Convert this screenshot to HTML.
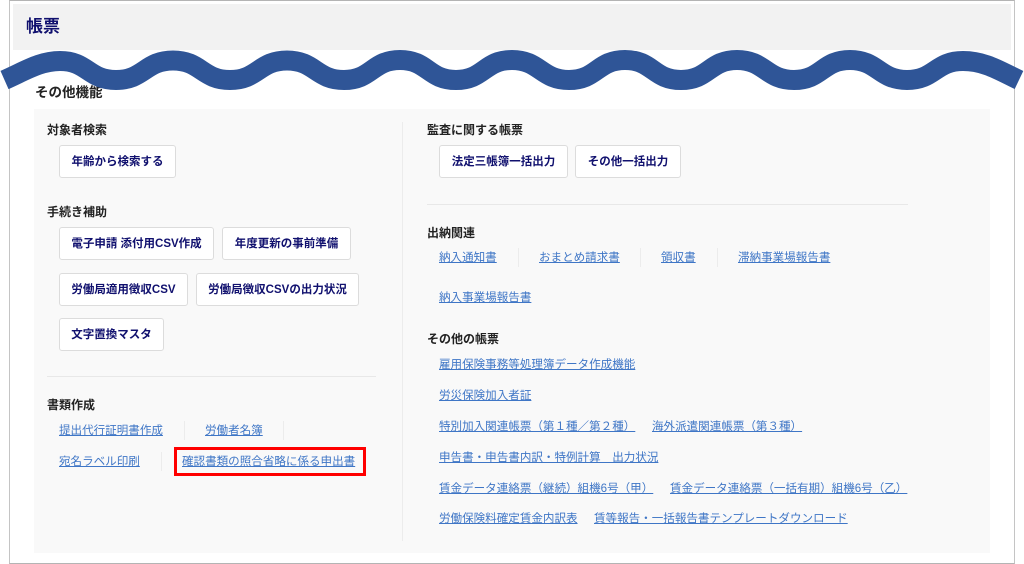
<!DOCTYPE html>
<html lang="ja">
<head>
<meta charset="utf-8">
<title>帳票</title>
<style>
html,body{margin:0;padding:0;background:#fff}
body{position:relative;width:1024px;height:564px;overflow:hidden;font-family:"Liberation Sans","Noto Sans CJK JP",sans-serif}
#w{position:absolute;left:0;top:0;width:1024px;height:564px;filter:blur(.35px)}
.r{position:absolute}
.h,.a,.b{position:absolute;white-space:nowrap;line-height:16px}
.h{font-size:12px;font-weight:bold;color:#222}
.a{font-size:11.56px;color:#3f76c6;text-decoration:underline}
.b{box-sizing:border-box;height:33px;line-height:33px;background:#fff;border:1px solid #dcdcdc;border-radius:3px;font-size:11.5px;font-weight:bold;color:#10106e;text-align:center}
.s{position:absolute;width:1px;height:19px;background:#ececec}
</style>
</head>
<body>
<div id="w">
<div class="r" style="left:9px;top:0;width:1006px;height:564px;box-sizing:border-box;border:1px solid #b4b4b4;border-left:1.5px solid #c4c4c4;border-right:1.5px solid #c4c4c4"></div>
<div class="r" style="left:13px;top:4px;width:998px;height:46px;background:#f2f2f2"></div>
<div class="r" style="left:26px;top:17px;font-size:17px;line-height:20px;font-weight:bold;color:#10106e">帳票</div>
<div class="r" style="left:35px;top:84px;font-size:13.5px;line-height:18px;font-weight:bold;color:#222">その他機能</div>
<div class="r" style="left:34px;top:109px;width:956px;height:444px;background:#f9f9f9"></div>
<div class="r" style="left:402px;top:122px;width:1px;height:419px;background:#ececec"></div>
<div class="r" style="left:47px;top:376px;width:329px;height:1px;background:#e8e8e8"></div>
<div class="r" style="left:427px;top:204px;width:481px;height:1px;background:#e8e8e8"></div>

<div class="h" style="left:47px;top:122px">対象者検索</div>
<div class="b" style="left:59px;top:145px;width:117px">年齢から検索する</div>
<div class="h" style="left:47px;top:204px">手続き補助</div>
<div class="b" style="left:59px;top:227px;width:155px">電子申請 添付用CSV作成</div>
<div class="b" style="left:222px;top:227px;width:129px">年度更新の事前準備</div>
<div class="b" style="left:59px;top:273px;width:129px">労働局適用徴収CSV</div>
<div class="b" style="left:196px;top:273px;width:163px">労働局徴収CSVの出力状況</div>
<div class="b" style="left:59px;top:318px;width:105px">文字置換マスタ</div>
<div class="h" style="left:47px;top:397px">書類作成</div>
<div class="a" style="left:59px;top:423px">提出代行証明書作成</div>
<div class="s" style="left:184px;top:421px"></div>
<div class="a" style="left:205px;top:423px">労働者名簿</div>
<div class="s" style="left:283px;top:421px"></div>
<div class="a" style="left:59px;top:454px">宛名ラベル印刷</div>
<div class="s" style="left:161px;top:452px"></div>
<div class="a" style="left:182px;top:454px">確認書類の照合省略に係る申出書</div>
<div class="r" style="left:174px;top:447px;width:192px;height:29px;box-sizing:border-box;border:3px solid #f00"></div>

<div class="h" style="left:427px;top:122px">監査に関する帳票</div>
<div class="b" style="left:439px;top:145px;width:129px">法定三帳簿一括出力</div>
<div class="b" style="left:575px;top:145px;width:106px">その他一括出力</div>
<div class="h" style="left:427px;top:225px">出納関連</div>
<div class="a" style="left:439px;top:250px">納入通知書</div>
<div class="s" style="left:518px;top:248px"></div>
<div class="a" style="left:539px;top:250px">おまとめ請求書</div>
<div class="s" style="left:640px;top:248px"></div>
<div class="a" style="left:661px;top:250px">領収書</div>
<div class="s" style="left:717px;top:248px"></div>
<div class="a" style="left:738px;top:250px">滞納事業場報告書</div>
<div class="a" style="left:439px;top:290px">納入事業場報告書</div>
<div class="h" style="left:427px;top:331px">その他の帳票</div>
<div class="a" style="left:439px;top:357px">雇用保険事務等処理簿データ作成機能</div>
<div class="a" style="left:439px;top:388px">労災保険加入者証</div>
<div class="a" style="left:439px;top:419px">特別加入関連帳票（第１種／第２種）</div>
<div class="a" style="left:652px;top:419px">海外派遣関連帳票（第３種）</div>
<div class="a" style="left:439px;top:450px">申告書・申告書内訳・特例計算　出力状況</div>
<div class="a" style="left:439px;top:481px">賃金データ連絡票（継続）組機6号（甲）</div>
<div class="a" style="left:670px;top:481px">賃金データ連絡票（一括有期）組機6号（乙）</div>
<div class="a" style="left:439px;top:511px">労働保険料確定賃金内訳表</div>
<div class="a" style="left:594px;top:511px">賃等報告・一括報告書テンプレートダウンロード</div>

<svg class="r" style="left:0;top:0" width="1024" height="564" viewBox="0 0 1024 564">
<path fill="none" stroke="#2f5597" stroke-width="20" d="M4.500 80C25 71 40 61 60 61C88 61 88 80 116 80C144 80 145 60.500 173 60.500C201 60.500 202 80 230 80C258 80 259 60.500 287 60.500C315 60.500 316 80 344 80C372 80 372 60 400 60C428 60 428 80 456 80C484 80 484 60 512 60C540 60 541 80 569 80C597 80 597 60 625 60C653 60 653 80 681 80C709 80 709 60 737 60C765 60 766 80 794 80C822 80 822 60 850 60C878 60 879 80 907 80C935 80 935 61 963 61C985 61 1000 71 1019 80"/>
</svg>
</div>
</body>
</html>
